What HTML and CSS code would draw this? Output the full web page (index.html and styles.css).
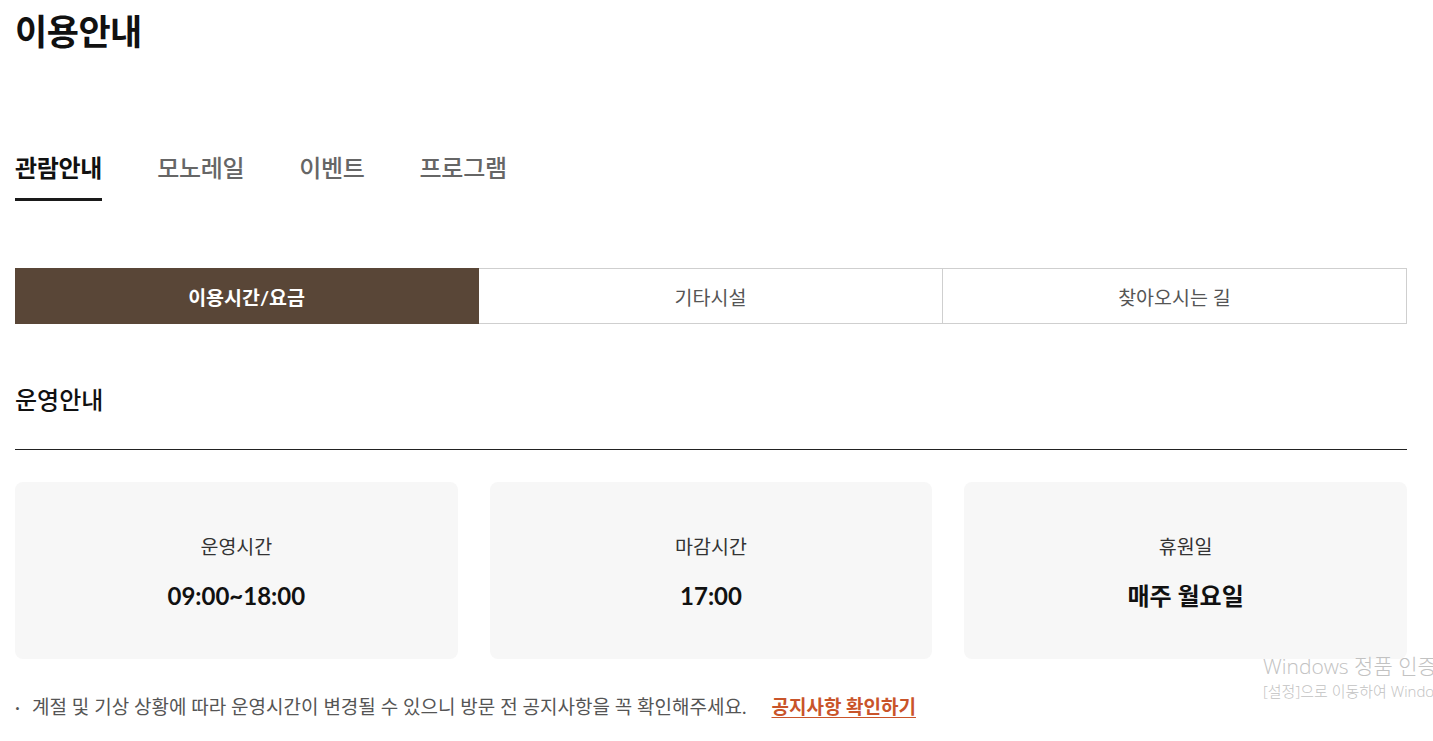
FILE: index.html
```html
<!DOCTYPE html>
<html lang="ko">
<head>
<meta charset="utf-8">
<title>이용안내</title>
<link rel="stylesheet" href="styles.css">
</head>
<body>
<div class="page">
  <h1 class="title">이용안내</h1>
  <nav class="tabs">
    <a class="tab active">관람안내</a>
    <a class="tab">모노레일</a>
    <a class="tab">이벤트</a>
    <a class="tab">프로그램</a>
  </nav>
  <div class="subtabs">
    <a class="subtab active">이용시간/요금</a>
    <a class="subtab">기타시설</a>
    <a class="subtab">찾아오시는 길</a>
  </div>
  <h2 class="section-title">운영안내</h2>
  <div class="cards">
    <div class="card"><p class="card-label">운영시간</p><p class="card-value">09:00~18:00</p></div>
    <div class="card"><p class="card-label">마감시간</p><p class="card-value">17:00</p></div>
    <div class="card"><p class="card-label">휴원일</p><p class="card-value">매주 월요일</p></div>
  </div>
  <p class="note"><span class="dot">·</span>계절 및 기상 상황에 따라 운영시간이 변경될 수 있으니 방문 전 공지사항을 꼭 확인해주세요.<a class="link">공지사항 확인하기</a></p>
</div>
<div class="watermark">
  <div class="wm-1">Windows 정품 인증</div>
  <div class="wm-2">[설정]으로 이동하여 Windows를 정품 인증합니다.</div>
</div>
</body>
</html>
```
FILE: styles.css
```css
html, body { margin: 0; padding: 0; background: #fff; }
body {
  font-family: "Lato", "Noto Sans CJK KR", sans-serif;
  color: #1a1a1a;
  overflow: hidden;
  height: 741px;
  position: relative;
}
.page { padding: 0 26px 0 15px; }
.title {
  margin: 0;
  padding-top: 5px;
  font-size: 35px;
  font-weight: 700;
  line-height: 52px;
  color: #111;
  letter-spacing: -0.5px;
}
.tabs {
  display: flex;
  gap: 55px;
  margin-top: 96px;
}
.tab {
  font-size: 24px;
  font-weight: 500;
  color: #666;
  line-height: 30px;
  padding-bottom: 15px;
  border-bottom: 3px solid transparent;
  letter-spacing: -0.3px;
}
.tab.active { color: #111; font-weight: 700; border-bottom-color: #1a1a1a; }
.subtabs {
  display: grid;
  grid-template-columns: repeat(3, 1fr);
  margin-top: 67px;
  height: 56px;
}
.subtab {
  display: flex;
  align-items: center;
  justify-content: center;
  font-size: 19.5px;
  color: #555;
  border: 1px solid #cfcfcf;
  border-left: none;
}
.subtab:last-child { border-right: 1px solid #cfcfcf; }
.subtab.active {
  background: #594637;
  color: #fff;
  font-weight: 700;
  border-color: #594637;
}
.section-title {
  margin: 60px 0 0;
  font-size: 24px;
  font-weight: 500;
  line-height: 32px;
  color: #111;
  padding-bottom: 33px;
  border-bottom: 1px solid #222;
}
.cards {
  display: grid;
  grid-template-columns: repeat(3, 1fr);
  gap: 32px;
  margin-top: 32px;
}
.card {
  background: #f7f7f7;
  border-radius: 8px;
  height: 177px;
  box-sizing: border-box;
  padding-top: 4px;
  display: flex;
  flex-direction: column;
  align-items: center;
  justify-content: center;
}
.card-label { margin: 0; font-size: 19.5px; color: #333; line-height: 26px; }
.card-value { margin: 21px 0 0; font-size: 24px; font-weight: 700; color: #111; line-height: 30px; }
.note {
  margin: 35px 0 0;
  font-size: 19px;
  color: #555;
  line-height: 26px;
}
.dot { display: inline-block; width: 17px; color: #555; }
.link {
  margin-left: 25px;
  color: #c9542a;
  font-weight: 700;
  text-decoration: underline;
  text-underline-offset: 3px;
}
.watermark {
  position: absolute;
  left: 1263px;
  top: 652px;
  right: 0;
  overflow: hidden;
  white-space: nowrap;
  color: #c2c2c2;
}
.wm-1 { font-family: "Open Sans", "Noto Sans CJK KR", sans-serif; font-weight: 300; font-size: 21px; line-height: 29px; }
.wm-2 { font-family: "Open Sans", "Noto Sans CJK KR", sans-serif; font-weight: 300; font-size: 15px; line-height: 20px; }
```
